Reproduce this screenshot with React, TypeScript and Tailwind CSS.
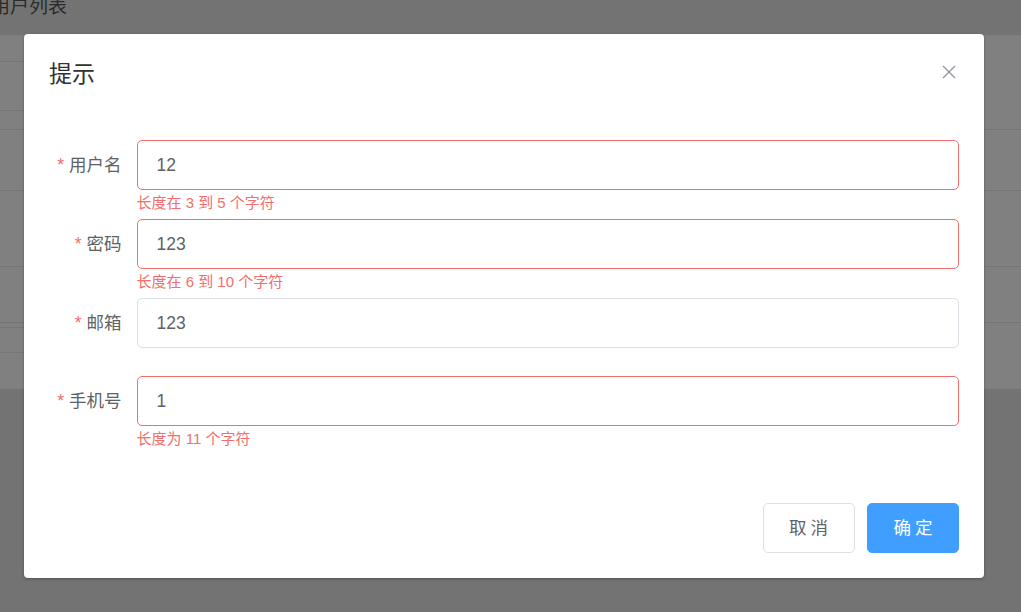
import React from "react";

const font = { fontFamily: '"Liberation Sans", "Noto Sans CJK SC", sans-serif' };

function Field({ label, value, error }: { label: string; value: string; error?: string }) {
  return (
    <div className="flex">
      <div className="w-[87.5px] shrink-0 pr-[15px] text-right text-[17.5px] leading-[50px] text-[#606266]">
        <span className="mr-[5px] text-[#f56c6c]">*</span>
        {label}
      </div>
      <div className="flex-1">
        <div
          className={`h-[50px] rounded-[5px] border px-[19px] text-[17.5px] leading-[48px] text-[#606266] ${
            error ? "border-[#f56c6c]" : "border-[#dcdfe6]"
          }`}
        >
          {value}
        </div>
        <div className="h-[28.75px] pt-[5px] text-[15px] leading-[15px] text-[#f56c6c]">{error ?? ""}</div>
      </div>
    </div>
  );
}

export default function App() {
  return (
    <div className="relative h-[612px] w-[1021px] overflow-hidden bg-[#737373]" style={font}>
      {/* background page (under overlay) */}
      <div className="h-[35px] overflow-hidden">
        <div className="ml-[-9px] mt-[-5px] text-[19px] leading-[24px] text-[#2b2b2b]">用户列表</div>
      </div>
      <div className="flex h-[354px] bg-[#808080]">
        <div className="flex w-[24px] flex-col">
          <div className="h-[27px] border-b border-[#767676]" />
          <div className="h-[49px] border-b border-[#767676]" />
          <div className="h-[19px] border-b border-[#767676]" />
          <div className="h-[61px] border-b border-[#767676]" />
          <div className="h-[76px] border-b border-[#767676]" />
          <div className="h-[56px] border-b border-[#767676]" />
          <div className="h-[5px] border-b border-[#767676]" />
          <div className="h-[25px] border-b border-[#767676]" />
        </div>
        <div className="flex flex-1 flex-col">
          <div className="h-[95px] border-b border-[#767676]" />
          <div className="h-[61px] border-b border-[#767676]" />
          <div className="h-[76px] border-b border-[#767676]" />
          <div className="h-[56px] border-b border-[#767676]" />
        </div>
      </div>

      {/* dialog */}
      <div className="absolute left-[24px] top-[34px] w-[960px] rounded-[4px] bg-white shadow-[0_1px_3px_rgba(0,0,0,0.3)]">
        <div className="relative px-[25px] pb-[12.5px] pt-[25px]">
          <div className="pt-[1px] text-[23px] leading-[29px] text-[#303133]">提示</div>
          <div className="absolute right-[25px] top-[28px] flex h-[20px] w-[20px] items-center justify-center">
            <svg width="16" height="16" viewBox="0 0 16 16" fill="none">
              <path d="M2 2L14 14M14 2L2 14" stroke="#909399" strokeWidth="1.3" />
            </svg>
          </div>
        </div>
        <div className="px-[25px] pb-[35.5px] pt-[38.5px]">
          <Field label="用户名" value="12" error="长度在 3 到 5 个字符" />
          <Field label="密码" value="123" error="长度在 6 到 10 个字符" />
          <Field label="邮箱" value="123" />
          <Field label="手机号" value="1" error="长度为 11 个字符" />
        </div>
        <div className="flex justify-end gap-[12.5px] px-[25px] pb-[25px] pt-[12.5px]">
          <div className="flex h-[50px] w-[92px] items-center justify-center rounded-[5px] border border-[#dcdfe6] bg-white text-[17.5px] tracking-[4px] text-[#606266]">
            <span className="ml-[4px]">取消</span>
          </div>
          <div className="flex h-[50px] w-[92px] items-center justify-center rounded-[5px] border border-[#409eff] bg-[#409eff] text-[17.5px] tracking-[4px] text-white">
            <span className="ml-[4px]">确定</span>
          </div>
        </div>
      </div>
    </div>
  );
}
